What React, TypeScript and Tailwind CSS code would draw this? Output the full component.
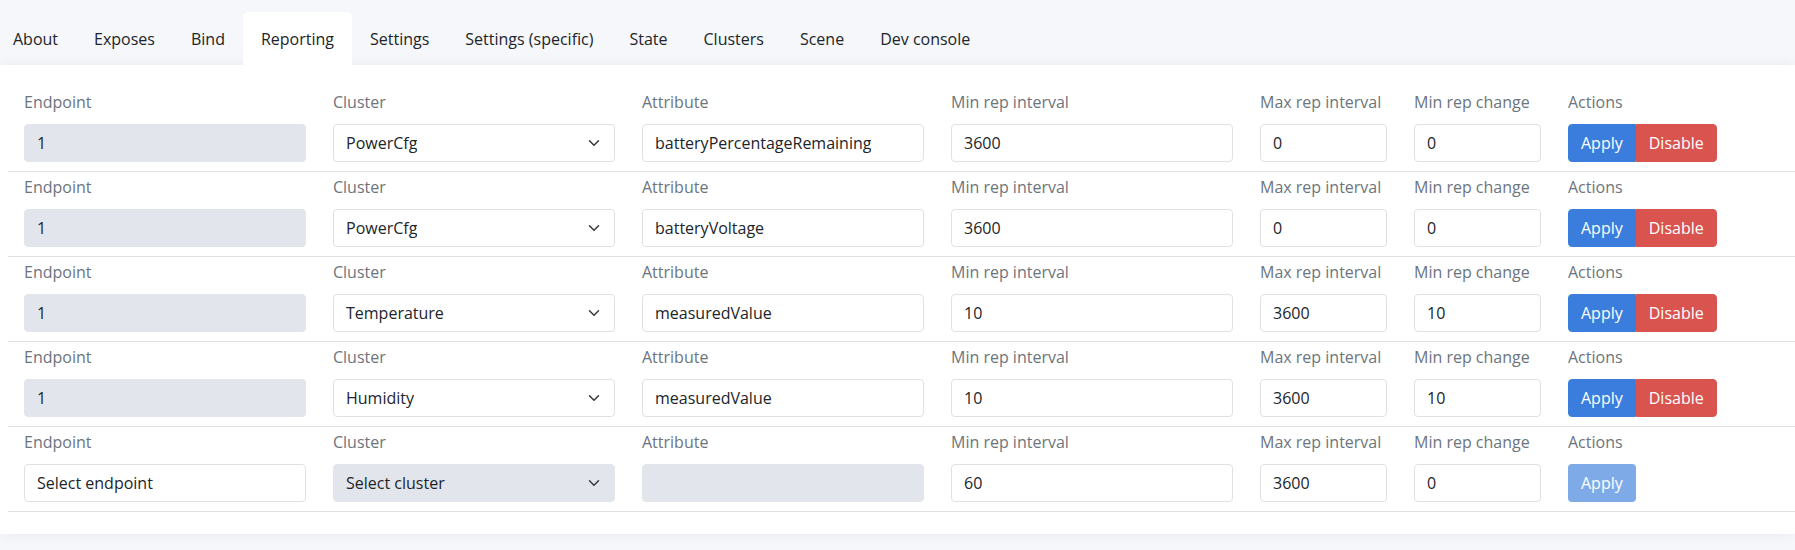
import React from 'react';

const TABS = ['About', 'Exposes', 'Bind', 'Reporting', 'Settings', 'Settings (specific)', 'State', 'Clusters', 'Scene', 'Dev console'];

const LABELS = ['Endpoint', 'Cluster', 'Attribute', 'Min rep interval', 'Max rep interval', 'Min rep change', 'Actions'];

interface ReportingRow {
  endpoint: string;
  cluster: string;
  attribute: string;
  minInterval: string;
  maxInterval: string;
  minChange: string;
  isNew?: boolean;
}

const ROWS: ReportingRow[] = [
  { endpoint: '1', cluster: 'PowerCfg', attribute: 'batteryPercentageRemaining', minInterval: '3600', maxInterval: '0', minChange: '0' },
  { endpoint: '1', cluster: 'PowerCfg', attribute: 'batteryVoltage', minInterval: '3600', maxInterval: '0', minChange: '0' },
  { endpoint: '1', cluster: 'Temperature', attribute: 'measuredValue', minInterval: '10', maxInterval: '3600', minChange: '10' },
  { endpoint: '1', cluster: 'Humidity', attribute: 'measuredValue', minInterval: '10', maxInterval: '3600', minChange: '10' },
  { endpoint: 'Select endpoint', cluster: 'Select cluster', attribute: '', minInterval: '60', maxInterval: '3600', minChange: '0', isNew: true },
];

function Field({ value, disabled = false, select = false }: { value: string; disabled?: boolean; select?: boolean }) {
  return (
    <div
      className={`relative flex h-[38px] items-center rounded-[4px] border px-3 text-[#212529] ${
        disabled ? 'border-[#e2e6ec] bg-[#e2e6ec]' : 'border-[#dee2e6] bg-white'
      }`}
    >
      <span className="truncate">{value}</span>
      {select && (
        <svg className="absolute right-3 top-1/2 h-3 w-4 -translate-y-1/2" viewBox="0 0 16 16" preserveAspectRatio="xMidYMid meet">
          <path d="m2 5 6 6 6-6" fill="none" stroke="#343a40" strokeWidth="2" strokeLinecap="round" strokeLinejoin="round" />
        </svg>
      )}
    </div>
  );
}

export default function App() {
  return (
    <div className="min-h-screen bg-[#f5f7fb] text-base leading-6" style={{ fontFamily: '"Open Sans", "Noto Sans", sans-serif' }}>
      {/* Tabs */}
      <nav className="-ml-[5px] flex h-[65px] items-end">
        {TABS.map((tab) => (
          <div
            key={tab}
            className={`flex h-[53px] items-center rounded-t-[5px] px-[18px] text-[#212529] ${
              tab === 'Reporting' ? 'bg-white' : ''
            }`}
          >
            {tab}
          </div>
        ))}
      </nav>

      {/* Reporting card */}
      <div className="bg-white pb-[22px] pt-[22px] shadow-[0_0_14px_rgba(33,37,41,0.06)]">
        {ROWS.map((row, i) => (
          <div key={i} className="ml-2 border-b border-[#dee2e6] pb-[9px] pl-4 pt-[3px]">
            <div className="grid grid-cols-[282px_282px_282px_282px_127px_127px_auto] gap-x-[27px] gap-y-[10px]">
              {LABELS.map((label) => (
                <div key={label} className="h-6 text-[#6c757d]">
                  {label}
                </div>
              ))}
              <Field value={row.endpoint} disabled={!row.isNew} />
              <Field value={row.cluster} disabled={row.isNew} select />
              <Field value={row.attribute} disabled={row.isNew} />
              <Field value={row.minInterval} />
              <Field value={row.maxInterval} />
              <Field value={row.minChange} />
              <div className="flex h-[38px]">
                {row.isNew ? (
                  <button className="rounded-[4px] border border-transparent bg-[#3b7ddd] px-3 text-white opacity-65">Apply</button>
                ) : (
                  <>
                    <button className="rounded-l-[4px] border border-[#3b7ddd] bg-[#3b7ddd] px-3 text-white">Apply</button>
                    <button className="rounded-r-[4px] border border-[#d9534f] bg-[#d9534f] px-3 text-white">Disable</button>
                  </>
                )}
              </div>
            </div>
          </div>
        ))}
      </div>
    </div>
  );
}
